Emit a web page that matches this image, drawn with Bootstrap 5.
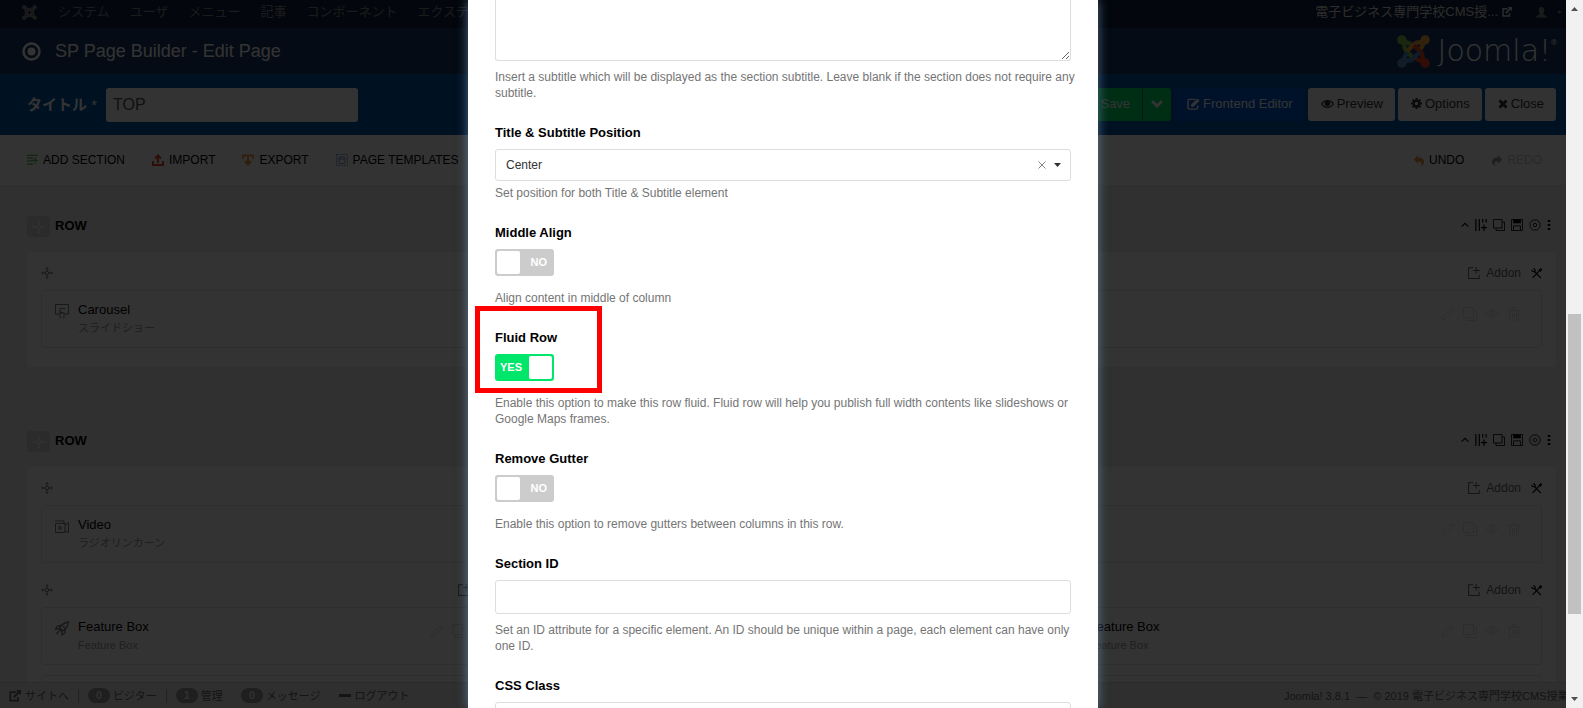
<!DOCTYPE html>
<html lang="ja">
<head>
<meta charset="utf-8">
<meta name="viewport" content="width=device-width, initial-scale=1">
<title>SP Page Builder - Edit Page</title>
<link href="https://cdn.jsdelivr.net/npm/bootstrap@5.3.0/dist/css/bootstrap.min.css" rel="stylesheet">
<style>
  body { font-family: "Liberation Sans", "Noto Sans CJK JP", sans-serif; font-size: 13px; line-height: 16px; color: #000; }
  a { color: inherit; text-decoration: none; }
  svg { display: block; flex: none; fill: none; stroke: currentColor; }
  svg.solid { fill: currentColor; stroke: none; }
  .ic12 { width: 12px; height: 12px; }
  .ic14 { width: 14px; height: 14px; }

  /* administrator chrome */
  .admin-nav { background: #10223e; height: 28px; padding: 0 4px 4px 22px; color: #888; }
  .admin-nav .menu-links { gap: 20px; margin-left: 21px; }
  .site-name { color: #ddd; }
  .title-bar { background: #1a3867; height: 46px; padding: 0 9px 0 22px; color: #fff; }
  .title-bar h1 { font-size: 18px; line-height: 22px; font-weight: 400; margin: 0 0 0 14px; }
  .wordmark { font-family: "DejaVu Sans", sans-serif; font-weight: 200; font-size: 30px; line-height: 32px; }
  .reg { font-size: 8px; line-height: 8px; }
  .action-bar { background: #0056a8; height: 61px; padding: 0 10px 0 27px; color: #fff; }
  .action-bar label { font-size: 15px; font-weight: 700; margin-right: 9px; white-space: nowrap; }
  .title-input { width: 252px; height: 34px; border: 0; border-radius: 3px; font-size: 16px; padding: 0 7px; color: #555; background: #fff; }
  .action-bar .btn { height: 33px; font-size: 13px; line-height: 16px; border: 0; border-radius: 3px; padding: 0 12px 2px 13px; display: flex; align-items: center; gap: 3px; white-space: nowrap; }
  .btn-save { background: #00e66b; color: #fff; }
  .btn-frontend { background: #0059d1; color: #fff; }
  .btn-plain { background: #f7f7f7; color: #333; }
  .builder-tools { background: #fff; height: 51px; padding: 0 24px 0 27px; font-size: 12px; border-bottom: 1px solid #ececec; }
  .builder-tools button { background: none; border: 0; padding: 0; display: flex; align-items: center; gap: 5px; color: #000; white-space: nowrap; }

  /* builder canvas */
  .canvas { background: #f0f0f0; padding: 30px 10px 0 27px; min-height: 0; }
  .section-head { height: 21px; margin-bottom: 15px; }
  .section-head h2 { font-size: 13px; line-height: 16px; font-weight: 700; margin: 0 0 2px 5px; }
  .drag-box { width: 23px; height: 21px; border-radius: 3px; background: #d4d4d4; color: #fff; display: flex; align-items: center; justify-content: center; }
  .section-tools { gap: 6px; padding: 0 5px 3px 0; }
  .panel { background: #fff; border-radius: 3px; padding: 4px 14px 9px; margin-bottom: 64px; }
  .panel .row { --bs-gutter-x: 15px; }
  .column-head { height: 34px; color: #666; font-size: 12px; gap: 6px; }
  .addon-item { border: 1px solid #e6e6e6; border-radius: 3px; height: 58px; padding: 11px 20px 0 13px; margin-bottom: 10px; gap: 9px; }
  .addon-item .kind { color: #777; margin-top: 2px; }
  .addon-item small { display: block; font-size: 11px; line-height: 16px; color: #999; margin-top: 2px; }
  .addon-item .edit-tools { gap: 8px; color: #dedede; margin-top: 5px; }

  .status-bar { background: #ebebeb; border-top: 1px solid #d8d8d8; height: 26px; padding: 0 0 0 9px; font-size: 11px; color: #666; white-space: nowrap; }
  .count-pill { background: #999; color: #eee; border-radius: 8px; width: 22px; line-height: 15px; text-align: center; font-weight: 700; margin-right: 3px; }
  .rule { width: 1px; height: 14px; background: #aaa; margin: 0 9px; }
  .gap-after { margin-right: 18px; }
  .credit { width: 282px; overflow: hidden; }

  /* dialog */
  .dim { position: absolute; inset: 0; background: rgba(0,0,0,.8); overflow: hidden; }
  .options-dialog { width: 100%; max-width: 630px; background: #fff; padding: 0 27px; height: 100%; box-shadow: 0 0 10px rgba(120,165,210,.6); overflow: hidden; }
  .field { margin-bottom: 24px; position: relative; }
  .field > label, .field > .caption { display: block; font-weight: 700; margin-bottom: 8px; }
  .field p { font-size: 12px; line-height: 16px; color: #757575; margin: 8px -8px 0 0; }
  .field .form-control { border: 1px solid #ddd; border-radius: 3px; height: 34px; font-size: 12px; box-shadow: none; background: #fff; }
  .field textarea.form-control { height: 61px; min-height: 0; border-top: 0; border-radius: 0 0 3px 3px; resize: vertical; }
  .pick { position: relative; margin-bottom: -4px; }
  .pick select { appearance: none; width: 100%; height: 32px; border: 1px solid #ddd; border-radius: 3px; background: #fff; font-size: 12px; color: #333; padding: 0 10px; }
  .pick .marks { position: absolute; right: 10px; top: 0; height: 32px; display: flex; align-items: center; gap: 8px; color: #333; }
  .pick .marks button { border: 0; background: none; padding: 0; color: #888; }
  .toggle { position: relative; width: 59px; height: 27px; margin-bottom: 14px; }
  .toggle input { appearance: none; display: flex; width: 100%; height: 100%; margin: 0; padding: 2px; border-radius: 3px; background: #ccc; }
  .toggle input::before { content: ""; width: 23px; background: #fff; border-radius: 2px; }
  .toggle input:checked { background: #00e66b; justify-content: flex-end; }
  .toggle label { position: absolute; inset: 0 7px 0 5px; text-align: right; font-size: 11px; line-height: 27px; font-weight: 700; color: #fff; }
  .toggle input:checked + label { text-align: left; }
  .toggle + p { margin-top: 0; }
  .callout-frame { position: absolute; left: -20px; top: -24px; width: 127px; height: 87px; border: 5px solid #f00; pointer-events: none; }

  .scroll-rail { width: 17px; flex: none; background: #f1f1f1; color: #505050; padding: 7px 2px; }
  .scroll-thumb { background: #c1c1c1; }
</style>
</head>
<body>
<svg width="0" height="0" class="position-absolute" aria-hidden="true">
  <symbol id="i-move" viewBox="0 0 14 14"><circle cx="7" cy="7" r="2"/><path d="M7 .8v4M7 9v4.2M.8 7H5M9 7h4.2M5.3 2.5 7 .8l1.7 1.7M5.3 11.5 7 13.2l1.7-1.7M2.5 5.3.8 7l1.7 1.7M11.5 5.3 13.2 7l-1.7 1.7"/></symbol>
  <symbol id="i-copy" viewBox="0 0 14 14"><path d="M.5.500h10v10H.5zM11 3.500h2.500v10h-10V11"/></symbol>
  <symbol id="i-plusbox" viewBox="0 0 14 14"><path d="M6 1H.700v12.300H13V9M9.500 0v8M6 4h8" stroke-width="1.200"/></symbol>
  <symbol id="i-tools" viewBox="0 0 14 14"><path d="m4 4 8.500 9M11 3 2 12.500" stroke-width="1.500"/><path d="M.8 2.500C1.500 5 4.500 5.500 5.500 3.500M3 .8C5 1 6 3 4.500 4.500M10 3l2.500-2 1 1-2 2.500" stroke-width="1.500"/></symbol>
  <symbol id="i-pencil" viewBox="0 0 14 14"><path d="m1 13 1-3.500L10.500 1l2.500 2.500L4.500 12zM9 2.500 11.500 5"/></symbol>
  <symbol id="i-eye" viewBox="0 0 14 14"><path d="M.7 6.500C3.500 1.500 10.500 1.500 13.300 6.500 10.500 11.500 3.500 11.500.7 6.500z"/><circle cx="7" cy="6.300" r="2.200"/></symbol>
  <symbol id="i-trash" viewBox="0 0 14 14"><path d="M1.500 3.500h11M5 3V1h4v2M2.500 3.500v9.500h9V3.500M5.500 6v5M7.500 6v5M9.500 6v5"/></symbol>
  <symbol id="i-external" viewBox="0 0 14 14"><path d="M8 2.500H1.500v10h9V8.500" stroke-width="2"/><path d="M5.500 8.500 12 2" stroke-width="2.400"/><path d="M8 0h6v6z" fill="currentColor" stroke="none"/></symbol>
  <symbol id="i-chev" viewBox="0 0 14 14"><path d="m1 10 6-6 6 6" stroke-width="1.800"/></symbol>
  <symbol id="i-cols" viewBox="0 0 14 14"><path d="M1 0v14M5 0v14M9 0v4M13 0v4M10.500 6.500v7.500M7 10h7" stroke-width="1.400"/></symbol>
  <symbol id="i-save" viewBox="0 0 14 14"><path d="M.5.500h13v13H.5zM3 13.500V8h8v5.500"/><path d="M2.500.500h9v4.500h-9z" fill="currentColor" stroke="none"/></symbol>
  <symbol id="i-gear" viewBox="0 0 14 14"><path d="M5.300.8 7 1.500 8.700.8l1.300.6.8 1.700 1.700.8.600 1.400L12.500 7l.6 1.700-.6 1.400-1.700.8-.8 1.700-1.300.6L7 12.500l-1.700.7-1.300-.6-.8-1.700-1.700-.8-.6-1.400L1.500 7 .9 5.300l.6-1.400 1.700-.8L4 1.400z"/><circle cx="7" cy="7" r="2"/></symbol>
  <symbol id="i-joomla" viewBox="0 0 34 34">
    <g stroke-width="4.500" stroke-linecap="butt">
      <g style="stroke:var(--j1)"><path d="M5 5c3 2.500 2.500 6 3 8.500.3 1.500 1 2.500 2 3.500l6.500 6.500M5 5c3 3 6.500 2 9 4.500l1.500 1.500"/></g>
      <g style="stroke:var(--j2)" transform="rotate(90 17 17)"><path d="M5 5c3 2.500 2.500 6 3 8.500.3 1.500 1 2.500 2 3.500l6.500 6.500M5 5c3 3 6.500 2 9 4.500l1.500 1.500"/></g>
      <g style="stroke:var(--j3)" transform="rotate(180 17 17)"><path d="M5 5c3 2.500 2.500 6 3 8.500.3 1.500 1 2.500 2 3.500l6.500 6.500M5 5c3 3 6.500 2 9 4.500l1.500 1.500"/></g>
      <g style="stroke:var(--j4)" transform="rotate(270 17 17)"><path d="M5 5c3 2.500 2.500 6 3 8.500.3 1.500 1 2.500 2 3.500l6.500 6.500M5 5c3 3 6.500 2 9 4.500l1.500 1.500"/></g>
    </g>
    <g stroke="none"><circle cx="5" cy="5" r="4.800" style="fill:var(--j1)"/><circle cx="29" cy="5" r="4.800" style="fill:var(--j2)"/><circle cx="29" cy="29" r="4.800" style="fill:var(--j3)"/><circle cx="5" cy="29" r="4.800" style="fill:var(--j4)"/></g>
  </symbol>
</svg>

<div class="d-flex vh-100 overflow-hidden">
  <div class="flex-fill position-relative d-flex flex-column overflow-hidden" style="min-width:0">
    <nav class="admin-nav d-flex align-items-center flex-shrink-0 text-nowrap" aria-label="管理メニュー">
      <a href="#" aria-label="Joomla"><svg width="15" height="15" style="--j1:currentColor;--j2:currentColor;--j3:currentColor;--j4:currentColor"><use href="#i-joomla"/></svg></a>
      <div class="menu-links d-flex flex-fill">
        <a href="#">システム</a><a href="#">ユーザ</a><a href="#">メニュー</a><a href="#">記事</a><a href="#">コンポーネント</a><a href="#">エクステンション</a>
      </div>
      <a href="#" class="site-name d-flex align-items-center gap-1">電子ビジネス専門学校CMS授... <svg width="10" height="10"><use href="#i-external"/></svg></a>
      <a href="#" class="ms-4 d-flex align-items-center" style="gap:10px" aria-label="ユーザ"><svg class="solid" width="11" height="11" viewBox="0 0 12 12"><path d="M6 0c2 0 3 1.500 3 3.500S8 7 7.500 7.500c0 1 4 1 4.500 4H0c.500-3 4.500-3 4.500-4C4 7 3 5.500 3 3.500S4 0 6 0z"/></svg><svg class="solid" width="5" height="3"><path d="M0 0h5L2.500 3z"/></svg></a>
    </nav>
    <header class="title-bar d-flex align-items-center flex-shrink-0">
      <svg width="19" height="19" viewBox="0 0 19 19"><circle cx="9.500" cy="9.500" r="8" stroke-width="2.500"/><circle cx="9.500" cy="9.500" r="4" fill="currentColor" stroke="none"/></svg>
      <h1 class="flex-fill">SP Page Builder - Edit Page</h1>
      <svg width="33" height="33" class="me-2" style="--j1:#7ac143;--j2:#f9a541;--j3:#f44321;--j4:#5091cd"><use href="#i-joomla"/></svg>
      <span class="wordmark">Joomla!</span><span class="reg mb-3">®</span>
    </header>
    <div class="action-bar d-flex align-items-center flex-shrink-0">
      <label for="page-title">タイトル <span class="fw-normal">*</span></label>
      <input id="page-title" class="title-input" type="text" value="TOP">
      <div class="d-flex ms-auto" style="gap:3px">
        <div class="d-flex">
          <button class="btn btn-save rounded-end-0"><svg class="ic12"><use href="#i-save"/></svg>Save</button>
          <button class="btn btn-save rounded-start-0 border-start border-success px-2" aria-label="保存メニュー"><svg width="12" height="9" viewBox="0 0 12 9"><path d="m1 2 5 5 5-5" stroke-width="3"/></svg></button>
        </div>
        <button class="btn btn-frontend"><svg width="13" height="12" viewBox="0 0 14 13"><path d="M9 1.500H2.500a1.500 1.500 0 0 0-1.500 1.500v7.500A1.500 1.500 0 0 0 2.500 12H10a1.500 1.500 0 0 0 1.500-1.500V8" stroke-width="1.500"/><path d="M4.500 9.500V7L11 .5 13.500 3 7 9.500z" fill="currentColor" stroke="none"/></svg>Frontend Editor</button>
        <button class="btn btn-plain"><svg width="13" height="10" viewBox="0 0 14 10"><path d="M.7 5C3.500.2 10.500.2 13.300 5 10.500 9.800 3.500 9.800.7 5z" stroke-width="1.300"/><circle cx="7" cy="4.500" r="3" fill="currentColor" stroke="none"/></svg>Preview</button>
        <button class="btn btn-plain"><svg width="11" height="11" viewBox="0 0 12 12"><circle cx="6" cy="6" r="3.200" stroke-width="2.600"/><path d="M6 0v2M6 10v2M0 6h2M10 6h2M1.800 1.800l1.400 1.400M8.800 8.800l1.400 1.400M1.800 10.200l1.400-1.400M8.800 3.200l1.400-1.400" stroke-width="2.200"/></svg>Options</button>
        <button class="btn btn-plain"><svg width="10" height="10" viewBox="0 0 10 10"><path d="m1.500 1.500 7 7M8.500 1.500l-7 7" stroke-width="3"/></svg>Close</button>
      </div>
    </div>
    <div class="builder-tools d-flex align-items-center flex-shrink-0">
      <div class="d-flex flex-fill" style="gap:27px">
        <button><svg width="11" height="12" viewBox="0 0 12 12" color="#5cb85c"><path d="M0 1h12M0 4h7M0 7h6M0 10.500h7M9 3v7M6 6.500h6" stroke-width="1.300"/></svg>ADD SECTION</button>
        <button><svg class="ic12" viewBox="0 0 12 12" color="#e8492e"><path d="M1 7v4h10V7" stroke-width="2"/><path d="M6 9V2M3 4.500 6 1.500l3 3" stroke-width="2"/></svg>IMPORT</button>
        <button><svg class="ic12" viewBox="0 0 12 12" color="#e8963a"><path d="M1 5V1.500h10V5" stroke-width="2"/><path d="M6 3v7M3 7l3 3.500L9 7" stroke-width="2"/></svg>EXPORT</button>
        <button><svg class="ic12" viewBox="0 0 12 12" color="#7ba7d0"><path d="M.5.500h11v11H.5z" stroke-dasharray="2 1"/><path d="M3 3h6v6.500H3zM3 5h6"/></svg>PAGE TEMPLATES</button>
      </div>
      <div class="d-flex" style="gap:28px">
        <button><svg class="solid" width="10" height="11" viewBox="0 0 10 11" color="#e8963a"><path d="M4 0v2.500c4 0 6 2 6 4.500 0 2-1.500 3.500-3.500 4 2-2.500 1-4.500-2.500-4.500V9L0 4.500z"/></svg>UNDO</button>
        <button disabled style="color:#ccc"><svg class="solid" width="10" height="11" viewBox="0 0 10 11" color="#999"><path d="M6 0v2.500C2 2.500 0 4.500 0 7c0 2 1.500 3.500 3.500 4-2-2.500-1-4.500 2.500-4.500V9l4-4.500z"/></svg>REDO</button>
      </div>
    </div>

    <main class="canvas flex-fill overflow-hidden" id="canvas"></main>

    <footer class="status-bar d-flex align-items-center flex-shrink-0">
      <a href="#" class="d-flex align-items-center gap-1"><svg width="12" height="12"><use href="#i-external"/></svg>サイトへ</a>
      <span class="rule"></span>
      <span class="count-pill">0</span><span>ビジター</span><span class="rule"></span>
      <span class="count-pill">1</span><span class="gap-after">管理</span>
      <span class="count-pill">0</span><span class="gap-after">メッセージ</span>
      <a href="#" class="d-flex align-items-center gap-1"><svg width="12" height="3"><path d="M0 1.500h12" stroke-width="3"/></svg>ログアウト</a>
      <span class="credit ms-auto">Joomla! 3.8.1 &nbsp;—&nbsp; © 2019 電子ビジネス専門学校CMS授業用</span>
    </footer>

    <div class="dim d-flex justify-content-center">
      <form class="options-dialog" role="dialog" aria-label="Row options">
        <div class="field">
          <textarea class="form-control" aria-label="Subtitle"></textarea>
          <p>Insert a subtitle which will be displayed as the section subtitle. Leave blank if the section does not require any subtitle.</p>
        </div>
        <div class="field">
          <label for="pos">Title &amp; Subtitle Position</label>
          <div class="pick">
            <select id="pos"><option>Center</option></select>
            <div class="marks"><button type="button" aria-label="Clear"><svg width="8" height="8" viewBox="0 0 8 8"><path d="m.5.500 7 7M7.500.500l-7 7"/></svg></button><svg class="solid" width="7" height="4"><path d="M0 0h7L3.500 4z"/></svg></div>
          </div>
          <p>Set position for both Title &amp; Subtitle element</p>
        </div>
        <div class="field">
          <span class="caption">Middle Align</span>
          <div class="toggle"><input type="checkbox" id="mid" role="switch"><label for="mid">NO</label></div>
          <p>Align content in middle of column</p>
        </div>
        <div class="field">
          <span class="callout-frame"></span>
          <span class="caption">Fluid Row</span>
          <div class="toggle"><input type="checkbox" id="fluid" role="switch" checked><label for="fluid">YES</label></div>
          <p>Enable this option to make this row fluid. Fluid row will help you publish full width contents like slideshows or Google Maps frames.</p>
        </div>
        <div class="field">
          <span class="caption">Remove Gutter</span>
          <div class="toggle"><input type="checkbox" id="gutter" role="switch"><label for="gutter">NO</label></div>
          <p>Enable this option to remove gutters between columns in this row.</p>
        </div>
        <div class="field">
          <label for="sid">Section ID</label>
          <input id="sid" type="text" class="form-control">
          <p>Set an ID attribute for a specific element. An ID should be unique within a page, each element can have only one ID.</p>
        </div>
        <div class="field">
          <label for="css">CSS Class</label>
          <input id="css" type="text" class="form-control">
        </div>
      </form>
    </div>
  </div>
  <div class="scroll-rail d-flex flex-column justify-content-between" aria-hidden="true">
    <svg class="solid mx-auto" width="7" height="4"><path d="M0 4h7L3.500 0z"/></svg>
    <div class="flex-fill d-flex flex-column"><div style="flex:303"></div><div class="scroll-thumb" style="flex:300"></div><div style="flex:83"></div></div>
    <svg class="solid mx-auto" width="7" height="4"><path d="M0 0h7L3.500 4z"/></svg>
  </div>
</div>

<script src="https://cdn.jsdelivr.net/npm/bootstrap@5.3.0/dist/js/bootstrap.bundle.min.js"></script>
<script>
  const icon = (name, size = 12) => `<svg class="ic${size}"><use href="#i-${name}"/></svg>`;
  const kinds = {
    carousel: '<path d="M4 10H.5V.500h13V10H10M10 4.500H5v4h3M5 9c-.5 2 0 3.500.5 5.500M9 9c.5 2 0 3.500-.5 5.500M4.500 9h5"/>',
    video: '<path d="M.5 4.500h9.500v9H.5zM0 2h9v2.500M10 6l3.500-2.500v10L10 12M4 7v4l3-2z"/>',
    rocket: '<path d="M13.500 1C9 1.500 6 4 4 8l2.500 2.500C11 8.500 13.200 5.500 13.500 1zM6 4.500 2.500 5 .5 8h3M10 8.500v3.500l-3 2V11M4 10l-2.500 3M8 5l2 2M5 7l2.500 2.500" stroke-width="1.300"/>'
  };
  const addon = a => `<div class="addon-item d-flex align-items-start">` + (a ? `
      <svg class="kind" width="14" height="15">${kinds[a.kind]}</svg>
      <div class="flex-fill">${a.title}<small>${a.sub}</small></div>
      <div class="edit-tools d-flex">${['pencil', 'copy', 'eye', 'trash'].map(n => icon(n, 14)).join('')}</div>` : '') + `</div>`;
  const column = (width, items) => `<div class="col-${width}">
      <div class="column-head d-flex align-items-center">${icon('move')}
        <a href="#" class="d-flex align-items-center ms-auto" style="gap:6px">${icon('plusbox')}Addon</a>
        <a href="#" class="ms-1 text-black" aria-label="Column options"><svg width="11" height="11"><use href="#i-tools"/></svg></a></div>
      ${items.map(addon).join('')}</div>`;
  const section = columns => `<section>
      <div class="section-head d-flex align-items-center"><span class="drag-box">${icon('move', 14)}</span><h2 class="flex-fill">ROW</h2>
        <div class="section-tools d-flex align-items-center"><svg width="8" height="8"><use href="#i-chev"/></svg>${['cols', 'copy', 'save', 'gear'].map(n => icon(n)).join('')}
        <svg width="4" height="12"><path d="M2 1v2M2 5v2M2 9v2" stroke-width="2.500"/></svg></div></div>
      <div class="panel"><div class="row">${columns}</div></div></section>`;
  const box = { kind: 'rocket', title: 'Feature Box', sub: 'Feature Box' };
  document.getElementById('canvas').innerHTML =
    section(column(12, [{ kind: 'carousel', title: 'Carousel', sub: 'スライドショー' }])) +
    section(column(12, [{ kind: 'video', title: 'Video', sub: 'ラジオリンカーン' }]) +
      column(4, [box, null]) + column(4, [null, null]) + column(4, [box, null]));
</script>
</body>
</html>
